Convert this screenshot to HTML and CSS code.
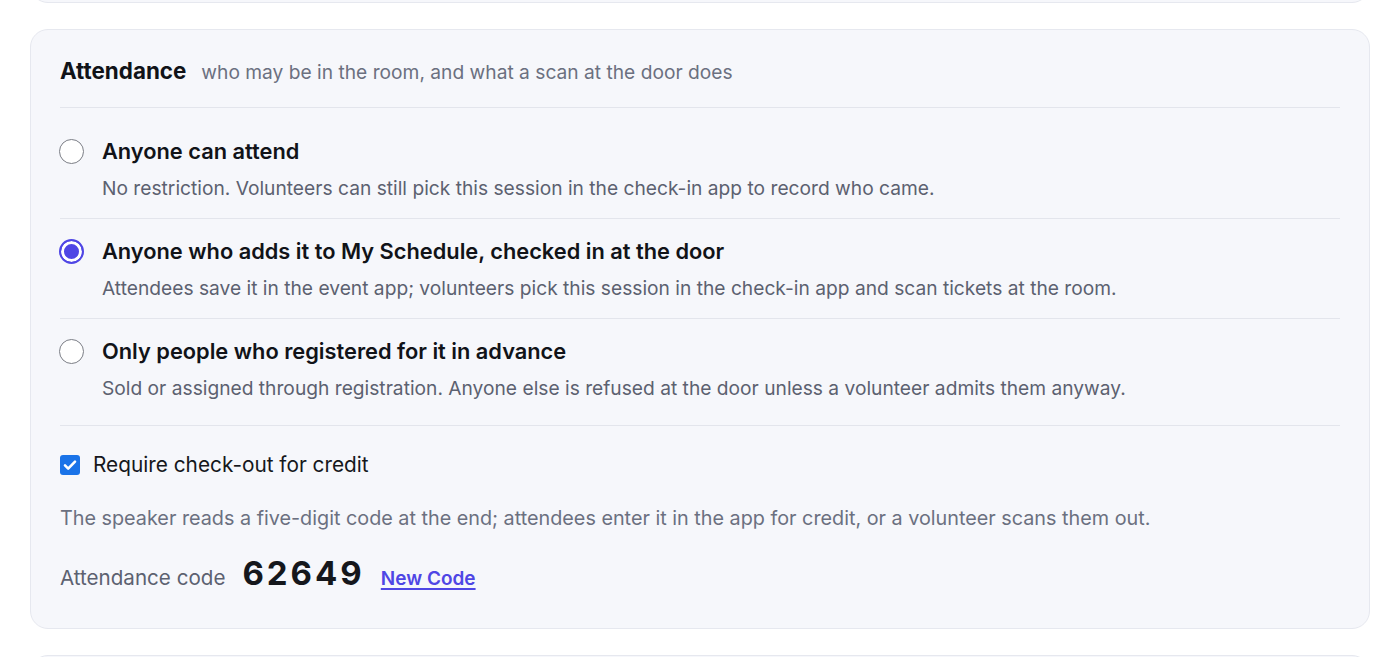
FILE: index.html
```html
<!DOCTYPE html>
<html lang="en">
<head>
<meta charset="utf-8">
<title>Attendance</title>
<link rel="stylesheet" href="styles.css">
</head>
<body>
<div class="page">
  <div class="card card-prev"></div>
  <section class="card">
    <header class="card-head">
      <h2 class="card-title">Attendance</h2>
      <span class="card-sub">who may be in the room, and what a scan at the door does</span>
    </header>
    <div class="options">
      <label class="option">
        <span class="radio"></span>
        <span class="option-text">
          <span class="option-title">Anyone can attend</span>
          <span class="option-desc">No restriction. Volunteers can still pick this session in the check-in app to record who came.</span>
        </span>
      </label>
      <label class="option">
        <span class="radio radio-on"></span>
        <span class="option-text">
          <span class="option-title">Anyone who adds it to My Schedule, checked in at the door</span>
          <span class="option-desc">Attendees save it in the event app; volunteers pick this session in the check-in app and scan tickets at the room.</span>
        </span>
      </label>
      <label class="option">
        <span class="radio"></span>
        <span class="option-text">
          <span class="option-title">Only people who registered for it in advance</span>
          <span class="option-desc">Sold or assigned through registration. Anyone else is refused at the door unless a volunteer admits them anyway.</span>
        </span>
      </label>
    </div>
    <div class="checkout">
      <label class="check-row">
        <span class="checkbox"><svg viewBox="0 0 20 20" width="20" height="20"><path d="M5 10.4l3.2 3.2L15 6.6" fill="none" stroke="#fff" stroke-width="2.6" stroke-linecap="round" stroke-linejoin="round"/></svg></span>
        <span class="check-label">Require check-out for credit</span>
      </label>
      <p class="help">The speaker reads a five-digit code at the end; attendees enter it in the app for credit, or a volunteer scans them out.</p>
      <div class="code-row">
        <span class="code-label">Attendance code</span>
        <span class="code">62649</span>
        <a class="code-link" href="#">New Code</a>
      </div>
    </div>
  </section>
  <div class="card card-next"></div>
</div>
</body>
</html>
```
FILE: styles.css
```css
* { box-sizing: border-box; }
html, body { margin: 0; padding: 0; background: #fff; }
body {
  font-family: Inter, "Noto Sans", "Liberation Sans", sans-serif;
  color: #111318;
  overflow: hidden;
  height: 657px;
}
.page {
  padding: 0 30px;
  display: flex;
  flex-direction: column;
  gap: 26px;
  margin-top: -40px;
}
.card {
  background: #f6f7fb;
  border: 1px solid #e6e8ef;
  border-radius: 18px;
}
.card-prev { height: 43px; }
.card-next { height: 60px; }
section.card { padding: 0 29px; }
.card-head {
  display: flex;
  align-items: baseline;
  gap: 15px;
  padding: 26px 0 20px;
  border-bottom: 1px solid #e3e5ec;
}
.card-title {
  margin: 0;
  font-size: 22.4px;
  font-weight: 700;
  line-height: 30px;
  color: #111318;
}
.card-sub {
  font-size: 19.2px;
  line-height: 30px;
  color: #6b7080;
}
.option {
  display: flex;
  gap: 18px;
  padding: 18px 0 17px;
  border-bottom: 1px solid #e3e5ec;
}
.option:first-child { padding-top: 29px; }
.option:last-child { padding-bottom: 24px; }
.radio {
  flex: none;
  width: 25px;
  height: 25px;
  border-radius: 50%;
  border: 1.5px solid #7b7e86;
  background: #fff;
  margin-top: 2px;
  margin-left: -1px;
}
.radio-on {
  border: 2px solid #4f46e5;
  box-shadow: inset 0 0 0 3px #fff;
  background: #4f46e5;
}
.option-text { display: flex; flex-direction: column; gap: 10px; }
.option-title {
  font-size: 21.8px;
  font-weight: 600;
  line-height: 28px;
  color: #111318;
}
.option-desc {
  font-size: 19.2px;
  line-height: 26px;
  color: #5c6170;
}
.checkout { padding: 26px 0 35px; }
.check-row { display: flex; align-items: center; gap: 13px; height: 26px; }
.checkbox {
  width: 20px;
  height: 20px;
  border-radius: 3px;
  background: #1a73e8;
  display: flex;
}
.check-label { font-size: 20.8px; line-height: 26px; color: #15171c; }
.help {
  margin: 27px 0 0;
  font-size: 19.8px;
  line-height: 26px;
  color: #6b7080;
}
.code-row {
  display: flex;
  align-items: baseline;
  margin-top: 22px;
  height: 40px;
}
.code-label { font-size: 20.6px; line-height: 40px; color: #5c6170; }
.code {
  font-size: 33px;
  font-weight: 700;
  line-height: 40px;
  letter-spacing: 3px;
  margin-left: 17px;
  color: #15171c;
}
.code-link {
  margin-left: 16px;
  font-size: 19px;
  font-weight: 600;
  line-height: 40px;
  color: #4f46e5;
  text-decoration: underline;
  text-underline-offset: 3px;
  text-decoration-thickness: 2px;
}
```
